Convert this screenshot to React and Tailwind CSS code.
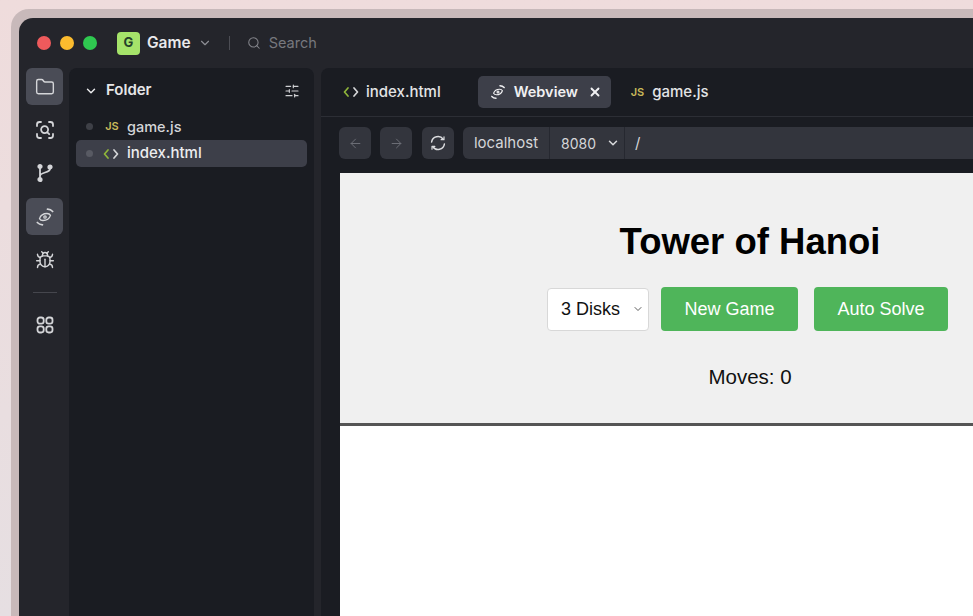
import { ChevronDown, Folder, Bug, Search, SlidersHorizontal, ArrowLeft, ArrowRight, X } from 'lucide-react';

const ui = { fontFamily: 'Inter, "Noto Sans", sans-serif' };

function ScanIcon() {
  return (
    <svg width="20" height="20" viewBox="0 0 20 20" fill="none" stroke="currentColor" strokeWidth="1.8" strokeLinecap="round">
      <path d="M2 6V4.5A2.5 2.5 0 0 1 4.5 2H6M14 2h1.500A2.500 2.500 0 0 1 18 4.500V6M18 14v1.500a2.500 2.500 0 0 1-2.500 2.500H14M6 18H4.500A2.500 2.500 0 0 1 2 15.500V14" />
      <circle cx="9.600" cy="9.600" r="3.500" />
      <path d="M12.300 12.300l1.900 1.900" />
    </svg>
  );
}

function BranchIcon() {
  return (
    <svg width="20" height="20" viewBox="0 0 20 20" fill="none" stroke="currentColor" strokeWidth="1.8" strokeLinecap="round">
      <circle cx="5" cy="3.500" r="1.700" fill="currentColor" />
      <circle cx="15" cy="4" r="1.700" fill="currentColor" />
      <circle cx="5" cy="16.500" r="1.700" fill="currentColor" />
      <path d="M5 5v10M15 6c0 4-10 3-10 7" />
    </svg>
  );
}

function OrbitEye({ size = 20, weight = 1.300 }) {
  return (
    <svg width={size} height={size} viewBox="0 0 20 20" fill="none" stroke="currentColor" strokeWidth={weight} strokeLinecap="round">
      <path d="M4.500 11.600C5.500 8.600 8.700 6.500 12 6.500c1.600 0 2.800.5 3.500 1.900-1 3-4.200 5.100-7.500 5.100-1.600 0-2.800-.5-3.500-1.900z" />
      <circle cx="10" cy="10" r="1.200" />
      <path d="M12.500 2.200c2 .1 3.900.9 5.200 2.300M7.500 17.800c-2-.1-3.900-.9-5.200-2.300" strokeWidth={weight + 0.400} />
    </svg>
  );
}

function GridIcon() {
  return (
    <svg width="20" height="20" viewBox="0 0 20 20" fill="none" stroke="currentColor" strokeWidth="1.800">
      <rect x="2.500" y="2.500" width="6.200" height="6.200" rx="2.400" />
      <rect x="11.300" y="2.500" width="6.200" height="6.200" rx="2.400" />
      <rect x="2.500" y="11.300" width="6.200" height="6.200" rx="2.400" />
      <rect x="11.300" y="11.300" width="6.200" height="6.200" rx="2.400" />
    </svg>
  );
}

function ReloadIcon() {
  return (
    <svg width="18" height="18" viewBox="0 0 18 18" fill="none" stroke="currentColor" strokeWidth="1.500" strokeLinecap="round" strokeLinejoin="round">
      <path d="M2.600 8A6.400 6.400 0 0 1 14.200 5.300M15.400 10A6.400 6.400 0 0 1 3.800 12.700" />
      <path d="M15 2.800v2.900h-2.900M3 15.200v-2.900h2.900" strokeWidth="1.200" />
    </svg>
  );
}

function CodeMark() {
  return (
    <svg width="16" height="12" viewBox="0 0 16 12" fill="none" stroke="#8fb53a" strokeWidth="1.700" strokeLinecap="round" strokeLinejoin="round">
      <path d="M5 2L1.500 6 5 10" />
      <path d="M11 2l3.500 4L11 10" stroke="#d5d6d8" />
    </svg>
  );
}

function JsMark() {
  return <span className="text-[11px] font-semibold leading-none text-[#c9b85a]">JS</span>;
}

function RailButton({ active, children }) {
  return (
    <div className={`flex h-[37px] w-[37px] items-center justify-center rounded-[6px] text-[#d4d5d8] ${active ? 'bg-[#4a4c56]' : ''}`}>
      {children}
    </div>
  );
}

function NavButton({ children, muted }) {
  return (
    <div className={`flex h-[32px] w-[32px] shrink-0 items-center justify-center rounded-[6px] bg-[#33353d] ${muted ? 'text-[#6b6d75]' : 'text-[#dcdde0]'}`}>
      {children}
    </div>
  );
}

export default function App() {
  return (
    <div className="h-[616px] w-[973px] overflow-hidden bg-gradient-to-b from-[#efdcdc] to-[#e6dfe2] pl-[11px] pt-[9px]" style={ui}>
      <div className="h-full rounded-tl-[18px] bg-[#c8b9ba] pl-[8px] pt-[9px]">
        <div className="flex h-full flex-col overflow-hidden rounded-tl-[14px] bg-[#24252b]">
          {/* title bar */}
          <div className="flex h-[50px] shrink-0 items-center pl-[18px]">
            <div className="flex items-center gap-[9px]">
              <span className="h-[14px] w-[14px] rounded-full bg-[#ee5a5c]" />
              <span className="h-[14px] w-[14px] rounded-full bg-[#fbbb2e]" />
              <span className="h-[14px] w-[14px] rounded-full bg-[#2fc950]" />
            </div>
            <div className="ml-[20px] flex h-[23px] w-[23px] items-center justify-center rounded-[4px] bg-[#a5e36a] text-[13px] font-bold text-[#23402a]">G</div>
            <span className="ml-[7px] text-[15.500px] font-semibold text-[#e9e9eb]">Game</span>
            <ChevronDown size={14} strokeWidth={2} className="ml-[7px] text-[#8d8e94]" />
            <span className="ml-[17px] h-[14px] w-px bg-[#4c4d54]" />
            <Search size={14} strokeWidth={1.8} className="ml-[17px] text-[#84858b]" />
            <span className="ml-[8px] text-[14.500px] text-[#77787e]">Search</span>
          </div>

          <div className="flex min-h-0 flex-1">
            {/* activity rail */}
            <div className="flex w-[50px] shrink-0 flex-col items-center pl-[1px] text-[#d4d5d8]">
              <RailButton active><Folder size={20} strokeWidth={1.700} /></RailButton>
              <div className="mt-[6px]"><RailButton><ScanIcon /></RailButton></div>
              <div className="mt-[6px]"><RailButton><BranchIcon /></RailButton></div>
              <div className="mt-[7px]"><RailButton active><OrbitEye /></RailButton></div>
              <div className="mt-[6px]"><RailButton><Bug size={20} strokeWidth={1.700} /></RailButton></div>
              <div className="mt-[14px] h-px w-[24px] bg-[#45464d]" />
              <div className="mt-[13px]"><RailButton><GridIcon /></RailButton></div>
            </div>

            {/* file tree */}
            <div className="w-[245px] shrink-0 rounded-t-[8px] bg-[#1a1c22] px-[7px]">
              <div className="flex h-[45px] items-center pl-[8px] pr-[7px]">
                <ChevronDown size={14} strokeWidth={2.500} className="text-[#e6e6e8]" />
                <span className="ml-[8px] text-[15px] font-semibold text-[#e6e6e8]">Folder</span>
                <SlidersHorizontal size={16} strokeWidth={1.700} className="ml-auto text-[#cfd0d3]" />
              </div>
              <div className="flex h-[27px] items-center text-[14.500px] text-[#d4d5d8]">
                <span className="ml-[10px] h-[7px] w-[7px] rounded-full bg-[#3e4047]" />
                <span className="ml-[11px] flex w-[16px] justify-center"><JsMark /></span>
                <span className="ml-[7px] font-medium">game.js</span>
              </div>
              <div className="flex h-[27px] items-center rounded-[5px] bg-[#3d3f49] text-[15px] text-[#ecedef]">
                <span className="ml-[10px] h-[7px] w-[7px] rounded-full bg-[#585a63]" />
                <span className="ml-[10px]"><CodeMark /></span>
                <span className="ml-[8px] font-medium">index.html</span>
              </div>
            </div>

            <div className="w-[7px] shrink-0" />

            {/* editor area */}
            <div className="min-w-0 flex-1 overflow-hidden rounded-tl-[8px] bg-[#1a1c22]">
              <div className="flex h-[49px] items-center border-b border-[#2c2e35] pl-[22px]">
                <CodeMark />
                <span className="ml-[7px] text-[15px] font-medium text-[#e3e4e6]">index.html</span>
                <div className="ml-[37px] flex h-[32px] w-[133px] items-center rounded-[5px] bg-[#3d3f49] pl-[12px] text-[#f0f0f2]">
                  <OrbitEye size={16} weight={1.400} />
                  <span className="ml-[8px] text-[14.500px] font-semibold">Webview</span>
                  <X size={14} strokeWidth={3.200} className="ml-[10px]" />
                </div>
                <span className="ml-[20px] flex"><JsMark /></span>
                <span className="ml-[8px] text-[15px] font-medium text-[#e3e4e6]">game.js</span>
              </div>

              <div className="flex h-[56px] items-start pl-[18px] pt-[10px]">
                <NavButton muted><ArrowLeft size={15} strokeWidth={1.600} /></NavButton>
                <div className="ml-[9px] shrink-0"><NavButton muted><ArrowRight size={15} strokeWidth={1.600} /></NavButton></div>
                <div className="ml-[10px] shrink-0"><NavButton><ReloadIcon /></NavButton></div>
                <div className="ml-[9px] flex h-[32px] w-[600px] shrink-0 items-center rounded-[6px] bg-[#33353d] text-[#d5d6d9]">
                  <span className="flex h-full w-[87px] items-center justify-center border-r border-[#262830] text-[15px]">localhost</span>
                  <span className="flex h-full w-[75px] items-center gap-[10px] border-r border-[#262830] pl-[11px] text-[14px]">
                    8080
                    <ChevronDown size={14} strokeWidth={2.600} />
                  </span>
                  <span className="ml-[10px] text-[15px]">/</span>
                </div>
              </div>

              {/* webview */}
              <div className="ml-[19px] h-[500px] w-[820px] rounded-t-[3px] bg-white" style={{ fontFamily: '"Liberation Sans", Arial, sans-serif' }}>
                <div className="flex h-[253px] flex-col items-center border-b-[3px] border-[#555555] bg-[#f0f0f0] pt-[45px]">
                  <h1 className="text-[36.500px] font-bold leading-[48px] text-black">Tower of Hanoi</h1>
                  <div className="mt-[21px] flex items-center pr-[5px]">
                    <div className="flex h-[43px] w-[102px] items-center justify-between rounded-[4px] border border-[#d8d8d8] bg-white pl-[13px] pr-[4px] text-[18px] text-[#111111]">
                      3 Disks
                      <ChevronDown size={12} strokeWidth={1.600} className="text-[#333333]" />
                    </div>
                    <div className="ml-[12px] flex h-[44px] w-[137px] items-center justify-center rounded-[4px] bg-[#4fb55a] text-[18px] text-white">New Game</div>
                    <div className="ml-[16px] flex h-[44px] w-[134px] items-center justify-center rounded-[4px] bg-[#4fb55a] text-[18px] text-white">Auto Solve</div>
                  </div>
                  <p className="mt-[32px] text-[20.500px] leading-[28px] text-[#111111]">Moves: 0</p>
                </div>
              </div>
            </div>
          </div>
        </div>
      </div>
    </div>
  );
}
